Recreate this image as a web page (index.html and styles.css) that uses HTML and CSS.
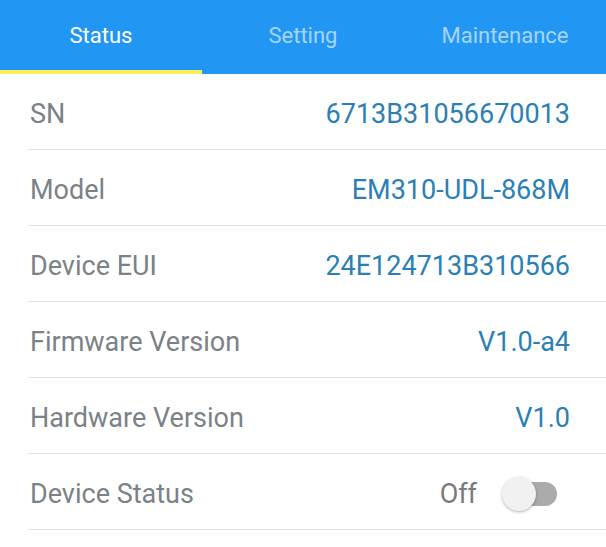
FILE: index.html
```html
<!DOCTYPE html>
<html>
<head>
<meta charset="utf-8">
<link rel="stylesheet" href="styles.css">
</head>
<body>
<div class="tabs">
  <div class="tab active">Status</div>
  <div class="tab">Setting</div>
  <div class="tab">Maintenance</div>
</div>
<div class="list">
  <div class="row"><span class="label">SN</span><span class="value">6713B31056670013</span></div>
  <div class="row"><span class="label">Model</span><span class="value">EM310-UDL-868M</span></div>
  <div class="row"><span class="label">Device EUI</span><span class="value">24E124713B310566</span></div>
  <div class="row"><span class="label">Firmware Version</span><span class="value">V1.0-a4</span></div>
  <div class="row"><span class="label">Hardware Version</span><span class="value">V1.0</span></div>
  <div class="row"><span class="label">Device Status</span><span class="status"><span class="off">Off</span><span class="switch"><span class="thumb"></span></span></span></div>
</div>
</body>
</html>
```
FILE: styles.css
```css
html, body {
  margin: 0;
  padding: 0;
  background: #ffffff;
  font-family: Roboto, "Noto Sans", sans-serif;
}
.tabs {
  display: flex;
  height: 74px;
  background: #2196f3;
}
.tab {
  flex: 1;
  display: flex;
  align-items: center;
  justify-content: center;
  padding-bottom: 4px;
  box-sizing: border-box;
  font-size: 22px;
  color: rgba(255, 255, 255, 0.62);
}
.tab.active {
  color: #ffffff;
  border-bottom: 4px solid #f9ee5e;
  padding-bottom: 0;
}
.list {
  padding-left: 28px;
}
.row {
  display: flex;
  align-items: center;
  justify-content: space-between;
  box-sizing: border-box;
  height: 76px;
  padding-top: 4px;
  border-bottom: 1px solid #e2e2e2;
  padding-right: 36px;
  font-size: 27px;
}
.label {
  color: #7a8287;
  padding-left: 2px;
}
.value {
  color: #2b7fb5;
}
.status {
  display: flex;
  align-items: center;
  gap: 28px;
  margin-right: 13px;
}
.off {
  color: #7a7a7a;
}
.switch {
  position: relative;
  width: 52px;
  height: 24px;
  border-radius: 12px;
  background: #ababab;
}
.thumb {
  position: absolute;
  left: -3px;
  top: -5px;
  width: 34px;
  height: 34px;
  border-radius: 50%;
  background: #f1f1f1;
  box-shadow: 0 1px 3px rgba(0, 0, 0, 0.3);
}
```
